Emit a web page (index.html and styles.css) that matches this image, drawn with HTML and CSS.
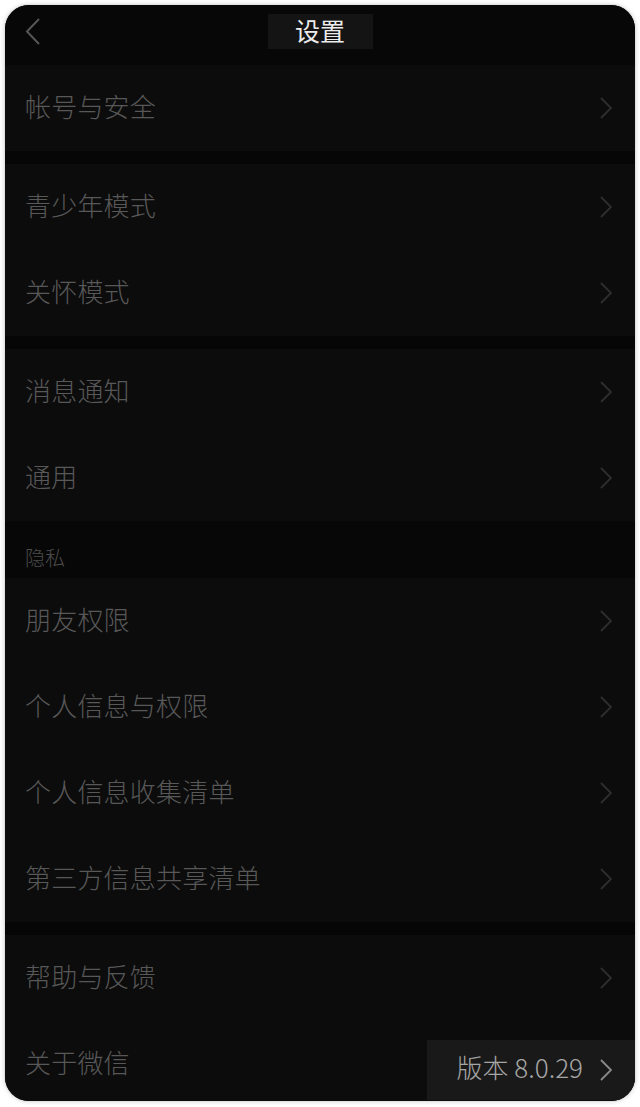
FILE: index.html
```html
<!DOCTYPE html>
<html lang="zh">
<head>
<meta charset="utf-8">
<title>设置</title>
<link rel="stylesheet" href="styles.css">
</head>
<body>
<div class="phone">
  <header class="topbar">
    <svg class="back" width="16" height="28" viewBox="0 0 16 28"><path d="M14 1 L2 13.5 L14 26" fill="none" stroke="#555" stroke-width="2"/></svg>
    <div class="title">设置</div>
  </header>
  <main class="list">
    <section class="group">
      <div class="row"><span class="label">帐号与安全</span><svg class="chev" viewBox="0 0 12 22"><path d="M1 1 L11 11 L1 21" fill="none" stroke="#2e2e2e" stroke-width="1.8"/></svg></div>
    </section>
    <div class="gap"></div>
    <section class="group">
      <div class="row"><span class="label">青少年模式</span><svg class="chev" viewBox="0 0 12 22"><path d="M1 1 L11 11 L1 21" fill="none" stroke="#2e2e2e" stroke-width="1.8"/></svg></div>
      <div class="row"><span class="label">关怀模式</span><svg class="chev" viewBox="0 0 12 22"><path d="M1 1 L11 11 L1 21" fill="none" stroke="#2e2e2e" stroke-width="1.8"/></svg></div>
    </section>
    <div class="gap"></div>
    <section class="group">
      <div class="row"><span class="label">消息通知</span><svg class="chev" viewBox="0 0 12 22"><path d="M1 1 L11 11 L1 21" fill="none" stroke="#2e2e2e" stroke-width="1.8"/></svg></div>
      <div class="row"><span class="label">通用</span><svg class="chev" viewBox="0 0 12 22"><path d="M1 1 L11 11 L1 21" fill="none" stroke="#2e2e2e" stroke-width="1.8"/></svg></div>
    </section>
    <div class="section-head">隐私</div>
    <section class="group">
      <div class="row"><span class="label">朋友权限</span><svg class="chev" viewBox="0 0 12 22"><path d="M1 1 L11 11 L1 21" fill="none" stroke="#2e2e2e" stroke-width="1.8"/></svg></div>
      <div class="row"><span class="label">个人信息与权限</span><svg class="chev" viewBox="0 0 12 22"><path d="M1 1 L11 11 L1 21" fill="none" stroke="#2e2e2e" stroke-width="1.8"/></svg></div>
      <div class="row"><span class="label">个人信息收集清单</span><svg class="chev" viewBox="0 0 12 22"><path d="M1 1 L11 11 L1 21" fill="none" stroke="#2e2e2e" stroke-width="1.8"/></svg></div>
      <div class="row"><span class="label">第三方信息共享清单</span><svg class="chev" viewBox="0 0 12 22"><path d="M1 1 L11 11 L1 21" fill="none" stroke="#2e2e2e" stroke-width="1.8"/></svg></div>
    </section>
    <div class="gap"></div>
    <section class="group">
      <div class="row"><span class="label">帮助与反馈</span><svg class="chev" viewBox="0 0 12 22"><path d="M1 1 L11 11 L1 21" fill="none" stroke="#2e2e2e" stroke-width="1.8"/></svg></div>
      <div class="row"><span class="label">关于微信</span>
        <div class="version"><span class="vtext">版本 8.0.29</span><svg class="chev" viewBox="0 0 12 22"><path d="M1 1 L11 11 L1 21" fill="none" stroke="#8a8a8a" stroke-width="1.8"/></svg></div>
      </div>
    </section>
  </main>
</div>
</body>
</html>
```
FILE: styles.css
```css
html, body {
  margin: 0;
  padding: 0;
  background: #ffffff;
}
body {
  padding: 5px;
  font-family: "Noto Sans CJK SC", "Liberation Sans", sans-serif;
}
.phone {
  width: 630px;
  height: 1096px;
  border-radius: 24px;
  overflow: hidden;
  background: #070707;
  box-shadow: 0 0 0 1px #e2e2e2, 0 0 4px 1px #d8d8d8;
  display: flex;
  flex-direction: column;
}
.topbar {
  height: 60px;
  flex: none;
  display: flex;
  align-items: flex-start;
  justify-content: center;
  background: #070707;
  position: relative;
}
.back {
  position: absolute;
  left: 20px;
  top: 13px;
}
.title {
  margin-top: 9px;
  width: 105px;
  height: 35px;
  background: #141414;
  color: #ececec;
  font-size: 25px;
  line-height: 33px;
  text-align: center;
  font-weight: 400;
}
.list {
  display: flex;
  flex-direction: column;
}
.group {
  background: #0c0c0c;
}
.gap {
  height: 13px;
  background: #060606;
}
.section-head {
  height: 57px;
  background: #070707;
  color: #4b4b4b;
  font-size: 20px;
  font-weight: 300;
  padding-left: 20px;
  box-sizing: border-box;
  display: flex;
  align-items: flex-end;
  padding-bottom: 6px;
}
.row {
  height: 86px;
  display: flex;
  align-items: center;
  justify-content: space-between;
  padding-left: 20px;
  padding-right: 23px;
}
.label {
  color: #585858;
  font-size: 26px;
  font-weight: 300;
  letter-spacing: 0.2px;
  margin-top: -6px;
}
.chev {
  width: 12px;
  height: 22px;
  flex: none;
}
.version {
  height: 60px;
  margin-right: -23px;
  width: 208px;
  box-sizing: border-box;
  background: #191919;
  display: flex;
  align-items: center;
  justify-content: flex-end;
  padding-right: 23px;
  gap: 17px;
  align-self: flex-end;
  margin-bottom: 7px;
}
.vtext {
  color: #a6a6a6;
  font-size: 26px;
  font-weight: 300;
  margin-top: -8px;
}
```
